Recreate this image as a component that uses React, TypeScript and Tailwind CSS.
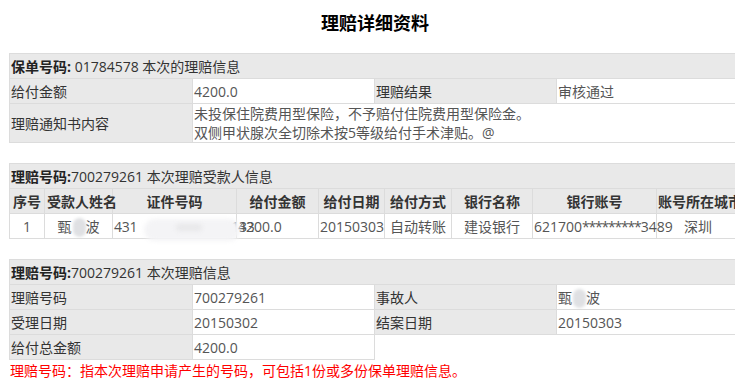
import React from "react";

const lbl = "h-[25px] p-0 pl-[1px] border border-[#dcdcdc] bg-[#e9e9e9] text-[#333] align-middle whitespace-nowrap";
const val = "h-[25px] p-0 pl-[1px] border border-[#dcdcdc] bg-white text-[#555] align-middle whitespace-nowrap";
const hdr = "h-[25px] p-0 pl-[1px] border border-[#dcdcdc] bg-[#e9e9e9] text-[#333] align-middle whitespace-nowrap text-left";
const th = "h-[25px] p-0 border border-[#dcdcdc] bg-[#e9e9e9] text-[#333] font-bold align-middle whitespace-nowrap text-center overflow-visible";
const td = "h-[25px] p-0 border border-[#dcdcdc] bg-white text-[#555] align-middle whitespace-nowrap text-center overflow-visible";

function Blob({ className }: { className: string }) {
  return <span className={"absolute rounded-full " + className} />;
}

function Name() {
  return (
    <span className="relative inline-block">
      甄<span className="text-transparent">某</span>波
      <Blob className="left-[15px] top-[1px] w-[13px] h-[19px] bg-[#dfe0e3] blur-[1.5px]" />
    </span>
  );
}

export default function App() {
  return (
    <div className="w-[735px] h-[384px] overflow-hidden bg-white font-['Open_Sans','Noto_Sans_CJK_SC',sans-serif] text-[14px] leading-[19px]">
      <div className="w-[750px] pt-[10px] h-[53px] text-center text-[18px] leading-[26px] font-bold text-black">
        理赔详细资料
      </div>

      <div className="ml-[9px] w-[740px]">
        <table className="table-fixed border-collapse w-[729px]">
          <colgroup>
            <col className="w-[183px]" />
            <col className="w-[182px]" />
            <col className="w-[182px]" />
            <col className="w-[182px]" />
          </colgroup>
          <tbody>
            <tr>
              <td colSpan={4} className={hdr}>
                <span className="font-bold text-[#222]">保单号码:</span> 01784578 本次的理赔信息
              </td>
            </tr>
            <tr>
              <td className={lbl}>给付金额</td>
              <td className={val}>4200.0</td>
              <td className={lbl}>理赔结果</td>
              <td className={val}>审核通过</td>
            </tr>
            <tr>
              <td className={lbl}>理赔通知书内容</td>
              <td colSpan={3} className={val}>
                <div>未投保住院费用型保险，不予赔付住院费用型保险金。</div>
                <div>双侧甲状腺次全切除术按5等级给付手术津贴。@</div>
              </td>
            </tr>
          </tbody>
        </table>

        <table className="table-fixed border-collapse w-[733px] mt-[20px]">
          <colgroup>
            <col className="w-[35px]" />
            <col className="w-[68px]" />
            <col className="w-[124px]" />
            <col className="w-[82px]" />
            <col className="w-[66px]" />
            <col className="w-[67px]" />
            <col className="w-[81px]" />
            <col className="w-[124px]" />
            <col className="w-[86px]" />
          </colgroup>
          <tbody>
            <tr>
              <td colSpan={9} className={hdr}>
                <span className="font-bold text-[#222]">理赔号码:</span>700279261 本次理赔受款人信息
              </td>
            </tr>
            <tr>
              <td className={th}>序号</td>
              <td className={th + " !text-left pl-[2px]"}>受款人姓名</td>
              <td className={th}>证件号码</td>
              <td className={th}>给付金额</td>
              <td className={th}>给付日期</td>
              <td className={th}>给付方式</td>
              <td className={th}>银行名称</td>
              <td className={th}>银行账号</td>
              <td className={th + " !text-left pl-[1px]"}>账号所在城市</td>
            </tr>
            <tr>
              <td className={td}>1</td>
              <td className={td}>
                <Name />
              </td>
              <td className={td + " !text-left pl-[1px] relative"}>
                <span className="relative inline-block tracking-[-0.2px]">
                  431<span className="text-transparent">000000000000</span>133
                  <Blob className="left-[30px] top-[2px] w-[96px] h-[22px] bg-[#f4f4f6] blur-[2px]" />
                  <Blob className="left-[62px] top-[7px] w-[26px] h-[7px] bg-[#e8e8ea] blur-[2px]" />
                </span>
              </td>
              <td className={td + " !text-left pl-[1px]"}>4200.0</td>
              <td className={td + " !text-left pl-[1px]"}>20150303</td>
              <td className={td}>自动转账</td>
              <td className={td}>建设银行</td>
              <td className={td + " !text-left pl-[1px]"}>
                621700<span className="tracking-[-1.2px]">*********</span>3489
              </td>
              <td className={td + " !text-left pl-[27px]"}>深圳</td>
            </tr>
          </tbody>
        </table>

        <table className="table-fixed border-collapse w-[729px] mt-[20px]">
          <colgroup>
            <col className="w-[183px]" />
            <col className="w-[182px]" />
            <col className="w-[182px]" />
            <col className="w-[182px]" />
          </colgroup>
          <tbody>
            <tr>
              <td colSpan={4} className={hdr}>
                <span className="font-bold text-[#222]">理赔号码:</span>700279261 本次理赔信息
              </td>
            </tr>
            <tr>
              <td className={lbl}>理赔号码</td>
              <td className={val}>700279261</td>
              <td className={lbl}>事故人</td>
              <td className={val}>
                <Name />
              </td>
            </tr>
            <tr>
              <td className={lbl}>受理日期</td>
              <td className={val}>20150302</td>
              <td className={lbl}>结案日期</td>
              <td className={val}>20150303</td>
            </tr>
            <tr>
              <td className={lbl}>给付总金额</td>
              <td className={val}>4200.0</td>
            </tr>
          </tbody>
        </table>

        <div className="pl-[1px] pt-[1px] text-[#ff0000] leading-[20px]">
          理赔号码：指本次理赔申请产生的号码，可包括1份或多份保单理赔信息。
        </div>
      </div>
    </div>
  );
}
